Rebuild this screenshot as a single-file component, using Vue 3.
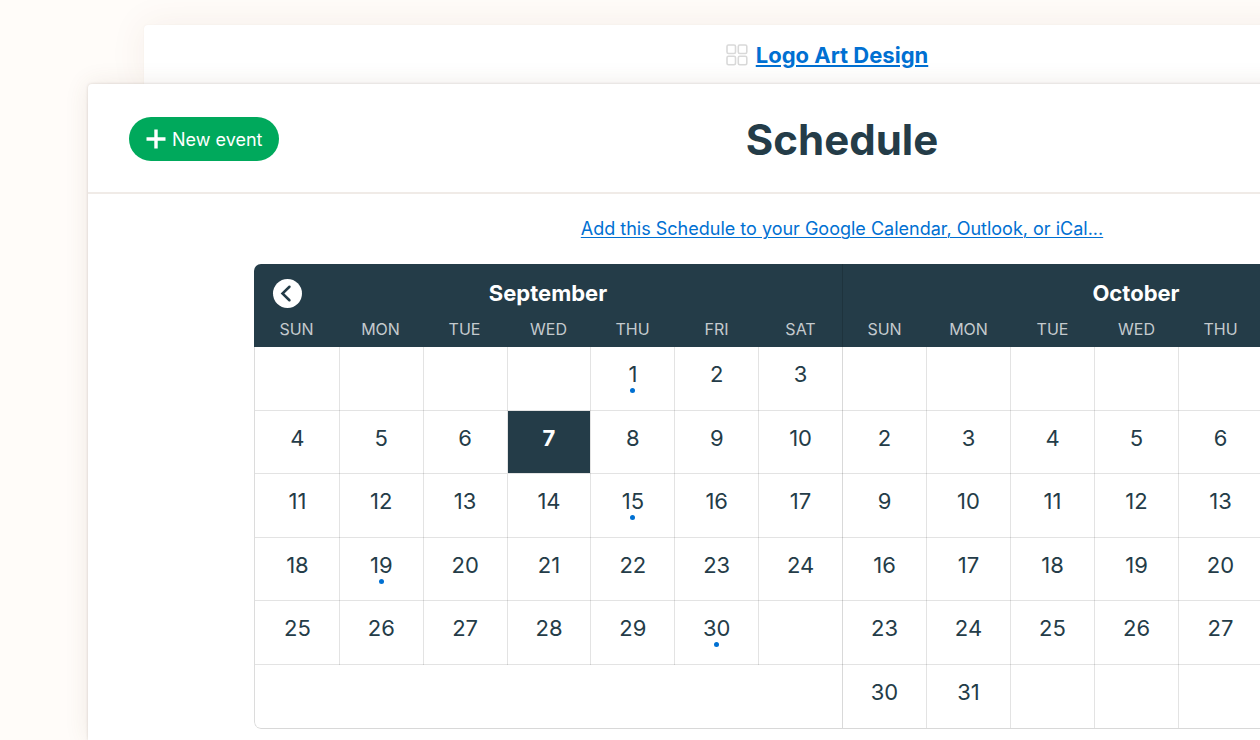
<script setup>
import { ref } from "vue";

const weekdays = ["Sun", "Mon", "Tue", "Wed", "Thu", "Fri", "Sat"];
const today = ref("September-7");
const events = ["September-1", "September-15", "September-19", "September-30"];

function buildWeeks(offset, total) {
  const weeks = [];
  for (let start = 1 - offset; start <= total; start += 7) {
    const week = [];
    for (let i = 0; i < 7; i++) {
      const day = start + i;
      week.push(day > 0 && day <= total ? day : null);
    }
    weeks.push(week);
  }
  return weeks;
}

const months = [
  { name: "September", weeks: buildWeeks(4, 30) },
  { name: "October", weeks: buildWeeks(6, 31) },
];

function isToday(month, day) {
  return today.value === `${month}-${day}`;
}
function hasEvent(month, day) {
  return events.includes(`${month}-${day}`);
}
</script>

<template>
  <div class="page">
    <nav class="project">
      <svg class="grid-icon" viewBox="0 0 22 22" aria-hidden="true">
        <rect x="1" y="1" width="8.5" height="8.5" rx="1.5" />
        <rect x="12.3" y="1" width="8.5" height="8.5" rx="1.5" />
        <rect x="1" y="12.3" width="8.5" height="8.5" rx="1.5" />
        <rect x="12.3" y="12.3" width="8.5" height="8.5" rx="1.5" />
      </svg>
      <a href="#project">Logo Art Design</a>
    </nav>

    <main class="panel">
      <header class="panel-header">
        <button class="new-event" type="button">
          <svg viewBox="0 0 20 20" aria-hidden="true">
            <path d="M10 0.5V19.5M0.5 10H19.5" />
          </svg>
          New event
        </button>
        <h1>Schedule</h1>
      </header>

      <div class="panel-body">
        <a class="subscribe" href="#subscribe"
          >Add this Schedule to your Google Calendar, Outlook, or iCal...</a
        >

        <div class="calendar">
          <button class="prev" type="button" aria-label="Previous month">
            <svg viewBox="0 0 30 30" aria-hidden="true">
              <path d="M17 8L9.8 15L17 22" />
            </svg>
          </button>
          <table v-for="month in months" :key="month.name" class="month">
            <caption>
              {{ month.name }}
            </caption>
            <thead>
              <tr>
                <th v-for="name in weekdays" :key="name" scope="col">
                  {{ name }}
                </th>
              </tr>
            </thead>
            <tbody>
              <tr v-for="(week, w) in month.weeks" :key="w">
                <td
                  v-for="(day, d) in week"
                  :key="d"
                  :class="{ today: day && isToday(month.name, day) }"
                >
                  {{ day }}
                  <span v-if="hasEvent(month.name, day)" class="dot"></span>
                </td>
              </tr>
            </tbody>
          </table>
        </div>
      </div>
    </main>
  </div>
</template>

<style>
body {
  margin: 0;
  background: #fffcf9;
}
</style>

<style scoped>
.page {
  box-sizing: border-box;
  min-height: 100vh;
  padding-top: 25px;
  overflow: hidden;
  background: #fffcf9;
  color: #243c48;
  font-family: Inter, "Liberation Sans", sans-serif;
}
a {
  color: #0070d2;
  text-decoration: underline;
  text-decoration-thickness: 1px;
  text-underline-offset: 2px;
}
.project {
  display: flex;
  align-items: center;
  justify-content: center;
  gap: 8px;
  height: 59px;
  margin: 0 -250px 0 144px;
  border-radius: 4px 4px 0 0;
  background: #fff;
  box-shadow: 0 0 2px rgb(100 60 40 / 6%), 0 0 36px rgb(130 70 40 / 8%);
}
.project a {
  font-size: 22px;
  font-weight: 700;
  text-decoration-thickness: 2px;
}
.grid-icon {
  width: 22px;
  height: 22px;
  fill: none;
  stroke: #d9d9d9;
  stroke-width: 1.6;
}
.panel {
  position: relative;
  min-height: 656px;
  margin: 0 -336px 0 88px;
  border-radius: 4px 4px 0 0;
  background: #fff;
  box-shadow: 0 0 3px rgb(80 60 50 / 20%), 0 0 24px rgb(110 70 50 / 11%);
}
.panel-header {
  display: grid;
  grid-template-columns: 1fr auto 1fr;
  align-items: center;
  height: 106px;
  padding: 2px 41px 0;
  border-bottom: 2px solid #f0ebe7;
}
h1 {
  margin: 0;
  font-size: 42px;
  font-weight: 700;
}
.new-event {
  display: flex;
  align-items: center;
  justify-self: start;
  gap: 6px;
  height: 44px;
  padding: 0 17px;
  border: 0;
  border-radius: 22px;
  background: #00a95c;
  color: #fff;
  font: inherit;
  font-size: 18px;
  cursor: pointer;
}
.new-event svg {
  width: 20px;
  height: 20px;
  fill: none;
  stroke: #fff;
  stroke-width: 3.4;
}
.panel-body {
  display: flex;
  flex-direction: column;
  padding: 20px 166px 0;
}
.subscribe {
  align-self: center;
  font-size: 18px;
  line-height: 30px;
}
.calendar {
  position: relative;
  display: flex;
  margin-top: 20px;
  border-radius: 7px;
  overflow: hidden;
  background: #fff;
}
.prev {
  position: absolute;
  top: 15px;
  left: 19px;
  width: 29px;
  height: 29px;
  padding: 0;
  border: 0;
  border-radius: 50%;
  background: #fff;
  cursor: pointer;
}
.prev svg {
  display: block;
  width: 29px;
  height: 29px;
  fill: none;
  stroke: #243c48;
  stroke-width: 2.6;
  stroke-linecap: round;
}
.month {
  display: block;
  flex: 1;
}
caption {
  display: block;
  padding: 14px 0 7px;
  background: #243c48;
  color: #fff;
  font-size: 22px;
  font-weight: 700;
  line-height: 30px;
}
thead,
tbody {
  display: grid;
}
thead {
  height: 32px;
  background: #243c48;
}
.month + .month caption,
.month + .month thead {
  box-shadow: inset 1px 0 rgb(0 0 0 / 15%);
}
tbody {
  box-sizing: border-box;
  grid-template-rows: repeat(6, 1fr);
  height: 382px;
  border-bottom: 1px solid #d8d8d8;
}
.month:first-of-type tbody {
  border-left: 1px solid #dcdcdc;
  border-bottom-left-radius: 7px;
}
tr {
  display: grid;
  grid-template-columns: repeat(7, 1fr);
}
th {
  padding: 0 0 0 1px;
  color: #c4cace;
  font-size: 16px;
  font-weight: 400;
  line-height: 28px;
  text-transform: uppercase;
}
td {
  padding: 13px 0 0 1px;
  box-shadow: inset 1px 0 rgb(0 0 0 / 11%), inset 0 -1px rgb(0 0 0 / 11%);
  font-size: 22px;
  line-height: 28px;
  text-align: center;
}
td:first-child {
  box-shadow: inset 0 -1px rgb(0 0 0 / 11%);
}
.month + .month td:first-child {
  box-shadow: inset 1px 0 rgb(0 0 0 / 15%), inset 0 -1px rgb(0 0 0 / 11%);
}
tr:nth-child(6) td {
  box-shadow: inset 1px 0 rgb(0 0 0 / 11%);
}
.month + .month tr:nth-child(6) td:first-child {
  box-shadow: inset 1px 0 rgb(0 0 0 / 15%);
}
.month .today {
  background: #243c48;
  box-shadow: inset 1px 0 #e3e3e3, inset 0 -1px #e3e3e3;
  color: #fff;
  font-weight: 700;
}
.dot {
  display: block;
  width: 5px;
  height: 5px;
  margin: 0 auto;
  border-radius: 50%;
  background: #0070d2;
}
</style>
